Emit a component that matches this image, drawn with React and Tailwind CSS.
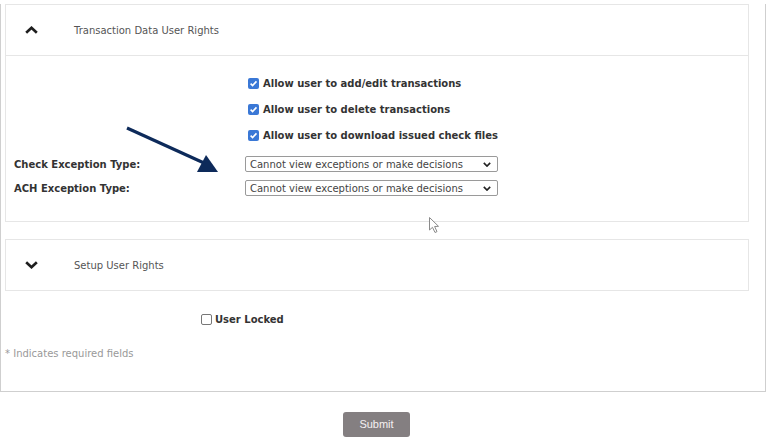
import { useState } from "react";

const FONT = { fontFamily: '"DejaVu Sans", Verdana, sans-serif' };

function Tick({ checked }) {
  if (!checked) {
    return <span className="inline-block h-[11px] w-[11px] shrink-0 rounded-[2px] border border-[#777] bg-white" />;
  }
  return (
    <span className="inline-flex h-[11px] w-[11px] shrink-0 items-center justify-center rounded-[2px] bg-[#3a78d6]">
      <svg viewBox="0 0 10 10" className="h-[9px] w-[9px]">
        <path d="M1.8 5.2 L4 7.3 L8.3 2.6" fill="none" stroke="#fff" strokeWidth="1.8" />
      </svg>
    </span>
  );
}

function Chevron({ up }) {
  return (
    <svg viewBox="0 0 16 9" className="h-[8px] w-[15px]">
      <path
        d={up ? "M2 7.5 L8 2 L14 7.5" : "M2 1.5 L8 7 L14 1.5"}
        fill="none"
        stroke="#1e1e1e"
        strokeWidth="3"
        strokeLinejoin="miter"
      />
    </svg>
  );
}

function Pick() {
  return (
    <div className="relative flex h-[16px] w-[253px] items-center rounded-[2px] border border-[#9a9a9a] bg-white pl-[4px] text-[10px] text-[#444]">
      Cannot view exceptions or make decisions
      <svg viewBox="0 0 10 6" className="absolute right-[6px] top-[5px] h-[5px] w-[8px]">
        <path d="M1 1 L5 5 L9 1" fill="none" stroke="#222" strokeWidth="2" />
      </svg>
    </div>
  );
}

const rights = [
  "Allow user to add/edit transactions",
  "Allow user to delete transactions",
  "Allow user to download issued check files",
];

export default function App() {
  const [open] = useState(true);

  return (
    <div className="relative h-[448px] w-[778px] overflow-hidden bg-white" style={FONT}>
      <div className="w-[766px] border-b border-l border-r border-[#cfcfcf]">
        <div className="ml-[4px] mr-[16px] mt-[4px] border border-[#e6e6e6]">
          <div className="flex h-[51px] items-center border-b border-[#e6e6e6]">
            <span className="ml-[18px] w-[50px]">
              <Chevron up={open} />
            </span>
            <span className="text-[10px] text-[#555]">Transaction Data User Rights</span>
          </div>
          <div className="h-[165px] pt-[20px]">
            <div className="ml-[242px] flex flex-col gap-[12px]">
              {rights.map((r) => (
                <label key={r} className="flex h-[14px] items-center gap-[4px] text-[10px] font-bold text-[#333]">
                  <Tick checked />
                  {r}
                </label>
              ))}
            </div>
            <div className="mt-[14px] flex flex-col gap-[8px]">
              {["Check Exception Type:", "ACH Exception Type:"].map((l) => (
                <div key={l} className="flex items-center">
                  <span className="ml-[8px] w-[231px] text-[10px] font-bold text-[#333]">{l}</span>
                  <Pick />
                </div>
              ))}
            </div>
          </div>
        </div>

        <div className="ml-[4px] mr-[16px] mt-[17px] flex h-[52px] items-center border border-[#e6e6e6]">
          <span className="ml-[18px] w-[50px]">
            <Chevron />
          </span>
          <span className="text-[10px] text-[#555]">Setup User Rights</span>
        </div>

        <div className="ml-[200px] mt-[21px] flex items-center gap-[3px] text-[10px] font-bold text-[#333]">
          <Tick />
          User Locked
        </div>

        <div className="ml-[4px] mt-[19px] h-[45px] text-[10px] text-[#999]">* Indicates required fields</div>
      </div>

      <div className="ml-[343px] mt-[19px]">
        <button
          className="h-[25px] w-[67px] rounded-[3px] bg-[#847f81] text-[11px] text-[#f4f0f2]"
          style={{ fontFamily: '"Liberation Sans", Arial, sans-serif' }}
        >
          Submit
        </button>
      </div>

      <svg className="pointer-events-none absolute left-0 top-0" width="778" height="448">
        <line x1="127" y1="128" x2="204" y2="163" stroke="#0d2a5a" strokeWidth="3.2" />
        <polygon points="218,172 197,172 206,155" fill="#0d2a5a" />
        <path
          d="M429.5 217.5 L429.5 230 L432.5 227.3 L435 232.5 L437 231.6 L434.6 226.5 L438.5 226.3 Z"
          fill="#fff"
          stroke="#8a8a8a"
          strokeWidth="1"
        />
      </svg>
    </div>
  );
}
